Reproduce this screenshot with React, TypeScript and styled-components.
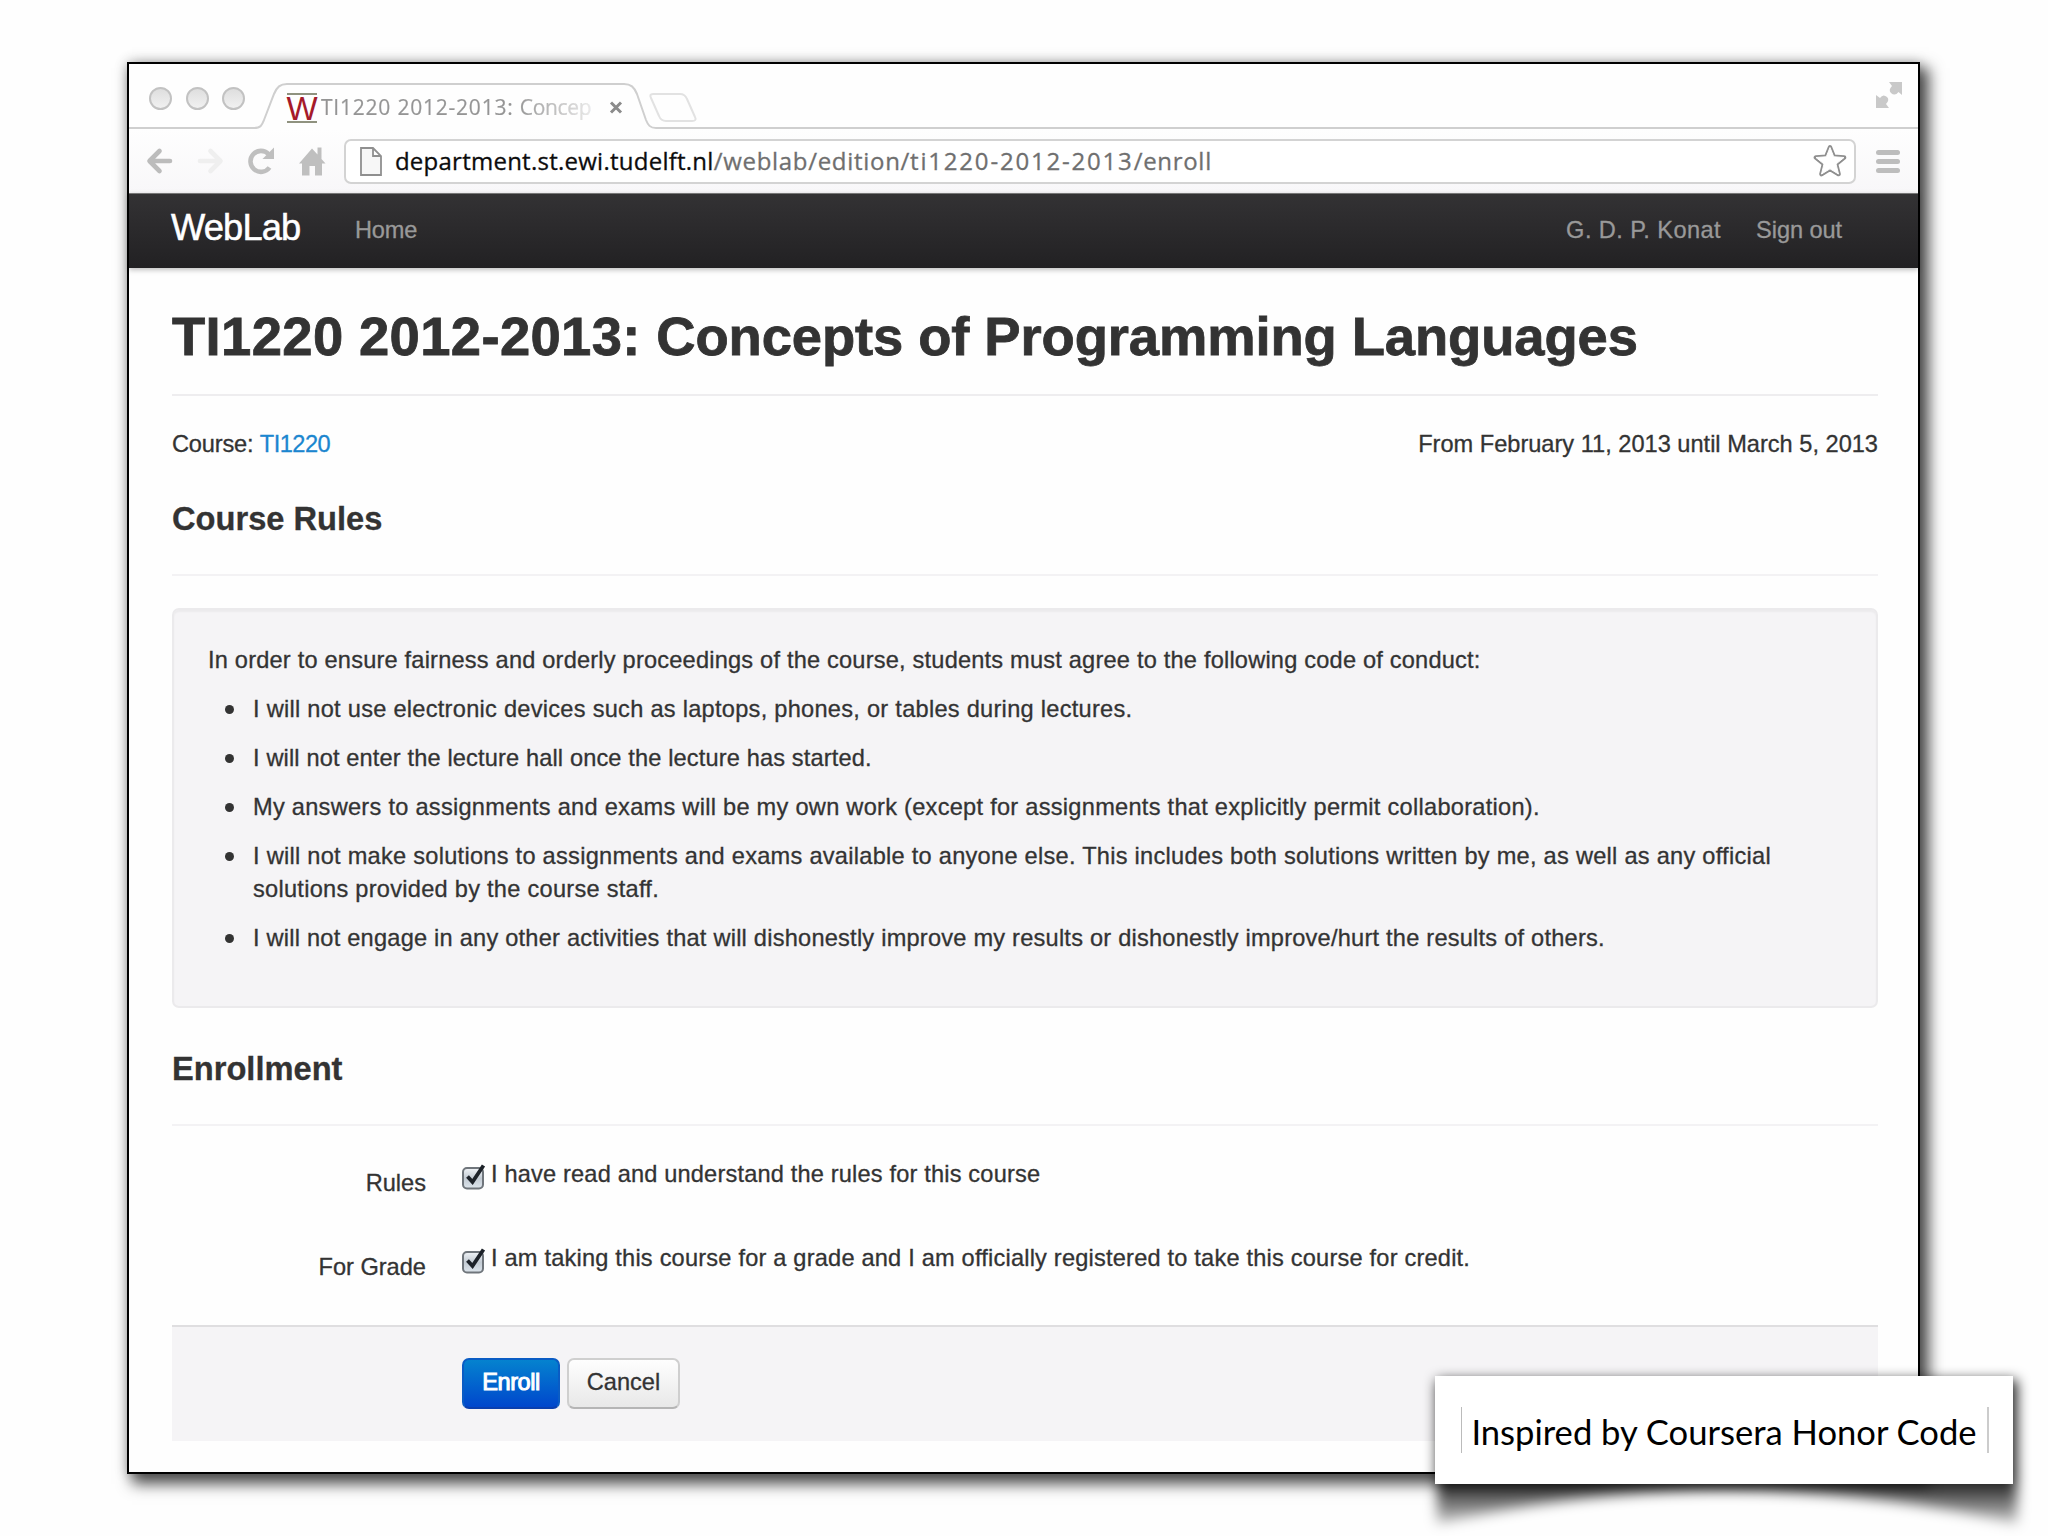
import React from 'react';
import styled, { createGlobalStyle } from 'styled-components';

const Global = createGlobalStyle`
  * { box-sizing: border-box; }
  html, body { margin: 0; padding: 0; }
  body { background: #fefefe; overflow: hidden; font-family: "Liberation Sans", Arial, sans-serif; }
`;

const Slide = styled.main`
  position: relative;
  width: 2048px;
  height: 1536px;
  padding: 62px 128px 62px 127px;
  background: #fefefe;
  overflow: hidden;
`;

const BrowserWindow = styled.section`
  display: flex;
  flex-direction: column;
  width: 1793px;
  height: 1412px;
  border: 2px solid #000;
  background: #fefefe;
  box-shadow: 7px 8px 14px 2px rgba(0, 0, 0, 0.68), 0 0 12px rgba(0, 0, 0, 0.22);
`;

const TabStrip = styled.div`
  display: flex;
  height: 65px;
  padding-left: 20px;
  background: linear-gradient(#cfcfcf, #cfcfcf) bottom / 100% 2px no-repeat;
`;

const Lights = styled.div`
  display: flex;
  gap: 13.5px;
  padding-top: 23px;
`;

const Light = styled.span`
  width: 23px;
  height: 23px;
  border: 2px solid #c2c2c2;
  border-radius: 50%;
  background: linear-gradient(#dedede, #f1f1f1);
`;

const Tab = styled.div`
  position: relative;
  display: flex;
  align-items: flex-start;
  width: 402px;
  height: 65px;
  margin-left: 9px;
  padding-left: 33px;
`;

const TabShape = styled.svg`
  position: absolute;
  left: 0;
  top: 19px;
`;

const Favicon = styled.span`
  position: relative;
  display: flex;
  justify-content: center;
  width: 30px;
  height: 30px;
  margin-top: 29px;
  border-top: 2px solid #8f927f;
  border-bottom: 2px solid #8f927f;
  color: #a51a2a;
  font: 33px/27px "Liberation Sans", Arial, sans-serif;
`;

const TabTitle = styled.span`
  position: relative;
  width: 277px;
  margin: 28px 0 0 4px;
  white-space: nowrap;
  font: 21px/31px "Open Sans", "Noto Sans", sans-serif;
  color: transparent;
  background: linear-gradient(90deg, #949494 195px, rgba(148, 148, 148, 0.12) 276px);
  background-clip: text;
  -webkit-text-stroke: 0.2px rgba(148, 148, 148, 0.3);
`;

const Tracked = styled.span<{ $track: number }>`
  letter-spacing: ${p => p.$track}px;
`;

const CloseIcon = styled.svg`
  position: relative;
  margin: 37px 0 0 11px;
`;

const NewTab = styled.svg`
  margin: 28px 0 0 -8px;
`;

const Fullscreen = styled.svg`
  margin: 17px 15px 0 auto;
`;

const Toolbar = styled.div`
  display: flex;
  align-items: center;
  height: 64px;
  padding: 0 18px 0 17px;
  background: linear-gradient(#fefefe, #f8f7f9);
`;

const NavIcons = styled.div`
  display: flex;
  gap: 23.5px;
  width: 198px;
`;

const Omnibox = styled.div`
  display: flex;
  align-items: center;
  width: 1513px;
  height: 45px;
  padding: 0 7px 0 14px;
  border: 2px solid #d3d3d3;
  border-radius: 7px;
  background: #fff;
`;

const Url = styled.span`
  flex: 1;
  margin-left: 13px;
  white-space: nowrap;
  font: 24px/32px "Open Sans", "Noto Sans", sans-serif;
  letter-spacing: 0.7px;
  color: #6f6f6f;
  -webkit-text-stroke: 0.3px #6f6f6f;
`;

const Host = styled.span`
  letter-spacing: 0.25px;
  color: #0c0c0c;
  -webkit-text-stroke: 0.3px #0c0c0c;
`;

const Menu = styled.div`
  display: grid;
  gap: 4px;
  width: 24px;
  margin-left: 20px;
`;

const MenuBar = styled.i`
  height: 5px;
  border-radius: 3px;
  background: #bdbdbd;
`;

const Navbar = styled.nav`
  display: flex;
  align-items: flex-start;
  flex: none;
  height: 75px;
  padding: 0 76px 0 42px;
  border-top: 1px solid #777;
  background: linear-gradient(#333234, #222123);
  box-shadow: 0 2px 5px rgba(0, 0, 0, 0.25);
`;

const Brand = styled.span`
  width: 184px;
  padding-top: 12px;
  font-size: 36.3px;
  line-height: 44px;
  letter-spacing: -0.85px;
  white-space: nowrap;
  color: #fff;
  -webkit-text-stroke: 0.5px #fff;
`;

const NavLink = styled.span<{ $gap?: number; $push?: boolean; $track?: number }>`
  margin-left: ${p => (p.$push ? 'auto' : `${p.$gap ?? 0}px`)};
  padding-top: 20px;
  font-size: 23.6px;
  line-height: 33px;
  letter-spacing: ${p => p.$track ?? 0}px;
  color: #999;
  -webkit-text-stroke: 0.3px #999;
`;

const Page = styled.div`
  padding: 36px 40px 0 43px;
  color: #333;
  font-size: 23.6px;
  line-height: 32.65px;
  -webkit-text-stroke: 0.3px #333;
`;

const Title = styled.h1`
  height: 92px;
  margin: 0 0 32px;
  border-bottom: 2px solid #eeedef;
  font-size: 54.4px;
  line-height: 66px;
  letter-spacing: -0.11px;
  white-space: nowrap;
  -webkit-text-stroke-width: 0.8px;
`;

const Meta = styled.div`
  display: flex;
  justify-content: space-between;
  height: 65.5px;
`;

const Link = styled.a`
  letter-spacing: -0.5px;
  color: #1b86cf;
  -webkit-text-stroke-color: #1b86cf;
`;

const Heading = styled.h3`
  height: 82px;
  margin: 0 0 32.5px;
  border-bottom: 2px solid #f3f2f4;
  font-size: 32.65px;
  line-height: 49px;
`;

const Well = styled.div`
  height: 400px;
  margin-bottom: 36px;
  padding: 34px;
  border: 2px solid #ebeaec;
  border-radius: 7px;
  background: #f5f4f6;
  box-shadow: inset 0 2px 2px rgba(0, 0, 0, 0.04);
`;

const Rule = styled.p<{ $track?: number }>`
  margin: 0 0 16.35px;
  letter-spacing: ${p => p.$track ?? 0}px;
`;

const RuleList = styled.ul`
  margin: 0;
  padding: 0;
  list-style: none;
`;

const RuleItem = styled.li<{ $track?: number }>`
  display: flex;
  gap: 19px;
  margin-bottom: 16.35px;
  padding-left: 17px;
  letter-spacing: ${p => p.$track ?? 0}px;

  &::before {
    content: '';
    flex: none;
    width: 9px;
    height: 9px;
    margin-top: 12px;
    border-radius: 50%;
    background: #333;
  }
`;

const Form = styled.form`
  margin-top: -33px;
  padding-top: 32.5px;
`;

const Field = styled.div`
  display: flex;
  height: 83.5px;
`;

const FieldLabel = styled.span`
  width: 254px;
  margin-right: 36px;
  padding-top: 9px;
  text-align: right;
`;

const FieldText = styled.span<{ $track?: number }>`
  margin-left: 5px;
  letter-spacing: ${p => p.$track ?? 0}px;
`;

const CheckIcon = styled.svg`
  margin-top: 4px;
`;

const Actions = styled.div`
  display: flex;
  gap: 7px;
  height: 116px;
  padding: 30.5px 0 0 290px;
  border-top: 2px solid #dfdee0;
  background: #f5f4f6;
`;

const Button = styled.button<{ $primary?: boolean }>`
  width: ${p => (p.$primary ? 98 : 113)}px;
  height: 51px;
  padding: 0 0 2px;
  border: 2px solid ${p => (p.$primary ? '#0a5cc4' : '#cfcfcf')};
  border-bottom-color: ${p => (p.$primary ? '#0a3fae' : '#b5b5b5')};
  border-radius: 7px;
  background: ${p => (p.$primary ? 'linear-gradient(#0585cf, #0044cc)' : 'linear-gradient(#fff, #e7e7e7)')};
  background-origin: border-box;
  font: 23.6px/32px "Liberation Sans", Arial, sans-serif;
  letter-spacing: ${p => (p.$primary ? -0.5 : 0)}px;
  -webkit-text-stroke: ${p => (p.$primary ? '1px #fff' : '0.3px #333')};
  color: ${p => (p.$primary ? '#fff' : '#333')};
`;

const CaptionWrap = styled.aside`
  position: absolute;
  left: 1434.5px;
  top: 1376px;
  width: 578px;
  height: 108px;
`;

const CurlShadow = styled.svg`
  position: absolute;
  left: -30px;
  top: -30px;
`;

const Caption = styled.div`
  position: relative;
  display: flex;
  align-items: center;
  height: 108px;
  padding: 0 24px 0 26px;
  background: #fff;
`;

const CaptionText = styled.span`
  display: flex;
  align-items: center;
  justify-content: center;
  width: 529px;
  height: 46px;
  padding-top: 4px;
  border-left: 1px solid #bbb;
  border-right: 2px solid #ccc;
  font: 34.6px/46px Lato, "Open Sans", sans-serif;
  white-space: nowrap;
  color: #000;
`;

function Checkbox() {
  return (
    <CheckIcon width="24" height="30" viewBox="0 0 24 30">
      <defs>
        <linearGradient id="box" x1="0" y1="0" x2="0" y2="1">
          <stop offset="0" stopColor="#f1f4f7" />
          <stop offset="0.5" stopColor="#c3cbd3" />
          <stop offset="1" stopColor="#dde5ec" />
        </linearGradient>
      </defs>
      <rect x="1" y="6" width="20" height="20.5" rx="4" fill="url(#box)" stroke="#6f757b" strokeWidth="2" />
      <path d="M5.5 14.5 L10.5 20 L21.5 3.5" fill="none" stroke="#1d2229" strokeWidth="3.8" />
    </CheckIcon>
  );
}

export default function App() {
  return (
    <Slide>
      <Global />
      <BrowserWindow>
        <TabStrip>
          <Lights>
            <Light />
            <Light />
            <Light />
          </Lights>
          <Tab>
            <TabShape width="402" height="46" viewBox="0 0 402 46">
              <path d="M0 46 V45 C7 45 8 42 10 37 L20 11 C23 4 26 1 33 1 H370 C377 1 380 4 383 11 L392 37 C394 42 396 45 402 45 V46 Z" fill="#fefefe" />
              <path d="M0 45 C7 45 8 42 10 37 L20 11 C23 4 26 1 33 1 H370 C377 1 380 4 383 11 L392 37 C394 42 396 45 402 45" fill="none" stroke="#cfcfcf" strokeWidth="2" />
            </TabShape>
            <Favicon>W</Favicon>
            <TabTitle>
              <Tracked $track={0.78}>TI1220 2012-2013: </Tracked>
              <Tracked $track={-0.3}>Concep</Tracked>
            </TabTitle>
            <CloseIcon width="14" height="13" viewBox="0 0 14 13">
              <path d="M2 1.5 L12 11.5 M12 1.5 L2 11.5" stroke="#8b8b8b" strokeWidth="3" />
            </CloseIcon>
          </Tab>
          <NewTab width="50" height="31" viewBox="0 0 50 31">
            <path d="M5 2 H32 Q37 2 39 7 L47 25 Q49 29 44 29 H18 Q13 29 11 24 L3 6 Q1 2 5 2 Z" fill="none" stroke="#e2e2e2" strokeWidth="2" />
          </NewTab>
          <Fullscreen width="28" height="28" viewBox="0 0 28 28">
            <path d="M14 1 H27 V14 L23.5 11 Q20 15.500 16 12 Q13 9 17 5 Z" fill="#c9c9c9" />
            <path d="M1 14 L5 17 Q8 12.500 12 16 Q15 19 11 23 L14 27 H1 Z" fill="#c9c9c9" />
          </Fullscreen>
        </TabStrip>
        <Toolbar>
          <NavIcons>
            <svg width="27" height="30" viewBox="0 0 27 30">
              <path d="M13.5 5 L3.5 15 L13.5 25 M4.5 15 H24" fill="none" stroke="#bcbcbc" strokeWidth="4.6" strokeLinecap="round" strokeLinejoin="round" />
            </svg>
            <svg width="27" height="30" viewBox="0 0 27 30">
              <path d="M13.5 5 L23.5 15 L13.5 25 M22.5 15 H3" fill="none" stroke="#efefef" strokeWidth="4.6" strokeLinecap="round" strokeLinejoin="round" />
            </svg>
            <svg width="28" height="30" viewBox="0 0 28 30">
              <path d="M22.5 21.5 A10.5 10.5 0 1 1 21.5 8" fill="none" stroke="#bfbfbf" strokeWidth="4.6" />
              <path d="M27 1.5 V13 H15.5 Z" fill="#bfbfbf" />
            </svg>
            <svg width="28" height="30" viewBox="0 0 28 30">
              <path d="M13 2.5 L18.5 8.5 V1.5 H22.5 V13 L26.5 17.5 H23 V29.5 H16 V20 H10.5 V29.5 H3 V17.5 H0 Z" fill="#bfbfbf" />
            </svg>
          </NavIcons>
          <Omnibox>
            <svg width="22" height="29" viewBox="0 0 22 29">
              <path d="M1 1 H13 L21 9 V28 H1 Z M13 1 V9 H21" fill="#f7f7f7" stroke="#8f8f8f" strokeWidth="1.8" />
            </svg>
            <Url>
              <Host>department.st.ewi.tudelft.nl</Host>/weblab/edition/<Tracked $track={1.8}>ti1220-2012-2013</Tracked>/enroll
            </Url>
            <svg width="34" height="34" viewBox="0 0 34 34">
              <path d="M17 3.5 L20.7 12.8 L31 13.5 L23 20 L25.5 30 L17 24.8 L8.5 30 L11 20 L3 13.5 L13.3 12.8 Z" fill="none" stroke="#8f8f8f" strokeWidth="4.6" strokeLinejoin="round" />
              <path d="M17 3.5 L20.7 12.8 L31 13.5 L23 20 L25.5 30 L17 24.8 L8.5 30 L11 20 L3 13.5 L13.3 12.8 Z" fill="#fff" stroke="#fff" strokeWidth="1" strokeLinejoin="round" />
            </svg>
          </Omnibox>
          <Menu>
            <MenuBar />
            <MenuBar />
            <MenuBar />
          </Menu>
        </Toolbar>
        <Navbar>
          <Brand>WebLab</Brand>
          <NavLink $track={-0.2}>Home</NavLink>
          <NavLink $push $track={0.42}>G. D. P. Konat</NavLink>
          <NavLink $gap={35} $track={-0.08}>Sign out</NavLink>
        </Navbar>
        <Page>
          <Title>
            <Tracked $track={0.36}>TI1220 2012-2013: </Tracked>Concepts of Programming Languages
          </Title>
          <Meta>
            <span><Tracked $track={-0.18}>Course: </Tracked><Link>TI1220</Link></span>
            <span>From February 11, 2013 until March 5, 2013</span>
          </Meta>
          <Heading>Course Rules</Heading>
          <Well>
            <Rule $track={0.2}>In order to ensure fairness and orderly proceedings of the course, students must agree to the following code of conduct:</Rule>
            <RuleList>
              <RuleItem $track={0.27}>I will not use electronic devices such as laptops, phones, or tables during lectures.</RuleItem>
              <RuleItem $track={0.14}>I will not enter the lecture hall once the lecture has started.</RuleItem>
              <RuleItem $track={0.27}>My answers to assignments and exams will be my own work (except for assignments that explicitly permit collaboration).</RuleItem>
              <RuleItem $track={0.265}>I will not make solutions to assignments and exams available to anyone else. This includes both solutions written by me, as well as any official solutions provided by the course staff.</RuleItem>
              <RuleItem $track={0.225}>I will not engage in any other activities that will dishonestly improve my results or dishonestly improve/hurt the results of others.</RuleItem>
            </RuleList>
          </Well>
          <Heading>Enrollment</Heading>
          <Form>
            <Field>
              <FieldLabel>Rules</FieldLabel>
              <Checkbox />
              <FieldText $track={0.17}>I have read and understand the rules for this course</FieldText>
            </Field>
            <Field>
              <FieldLabel>For Grade</FieldLabel>
              <Checkbox />
              <FieldText $track={0.2}>I am taking this course for a grade and I am officially registered to take this course for credit.</FieldText>
            </Field>
            <Actions>
              <Button type="button" $primary>Enroll</Button>
              <Button type="button">Cancel</Button>
            </Actions>
          </Form>
        </Page>
      </BrowserWindow>
      <CaptionWrap>
        <CurlShadow width="640" height="190" viewBox="-30 -30 640 190">
          <defs>
            <filter id="soft" x="-20%" y="-30%" width="140%" height="170%">
              <feGaussianBlur stdDeviation="6.5" />
            </filter>
            <linearGradient id="curl" x1="0" y1="105" x2="0" y2="148" gradientUnits="userSpaceOnUse">
              <stop offset="0" stopColor="#000" stopOpacity="0.88" />
              <stop offset="1" stopColor="#000" stopOpacity="0.2" />
            </linearGradient>
          </defs>
          <path d="M2 4 H582 V148 Q290 80 2 148 Z" fill="url(#curl)" filter="url(#soft)" />
        </CurlShadow>
        <Caption>
          <CaptionText>Inspired by Coursera Honor Code</CaptionText>
        </Caption>
      </CaptionWrap>
    </Slide>
  );
}
